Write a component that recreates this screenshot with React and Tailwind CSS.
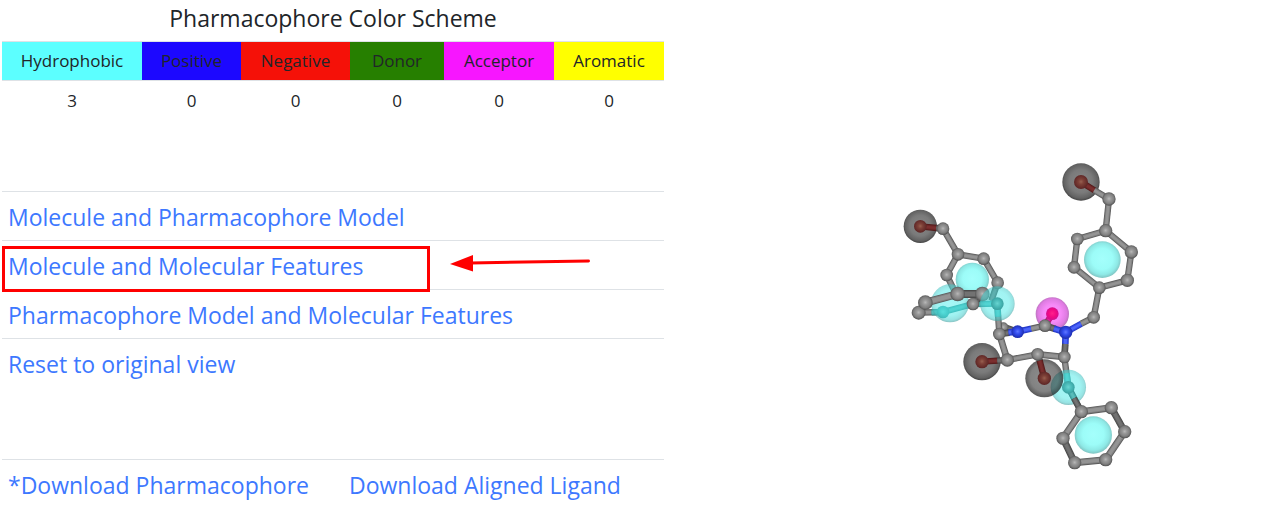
const features = [
  { name: 'Hydrophobic', count: 3, col: 'w-[140px]', bg: 'bg-[#5cffff]' },
  { name: 'Positive', count: 0, col: 'w-[99px]', bg: 'bg-[#1c08ff]' },
  { name: 'Negative', count: 0, col: 'w-[109px]', bg: 'bg-[#f51108]' },
  { name: 'Donor', count: 0, col: 'w-[94px]', bg: 'bg-[#267f00]' },
  { name: 'Acceptor', count: 0, col: 'w-[110px]', bg: 'bg-[#f716ff]' },
  { name: 'Aromatic', count: 0, col: 'w-[110px]', bg: 'bg-[#ffff00]' },
];

const tones = {
  gray: ['#5c5c5c', '#808080', '#949494'],
  dark: ['#484848', '#5e5e5e', '#727272'],
  blue: ['#2438c4', '#3049e6', '#4c64f8'],
  red: ['#541c1c', '#6c2626', '#7a2e2e'],
  teal: ['#389696', '#46acac', '#58bcba'],
  pink: ['#b8147c', '#d8148c', '#e4209a'],
};

function Bond({ p, tone = 'gray', w = 19 }) {
  const [x1, y1, x2, y2] = p;
  const [edge, mid, light] = tones[tone];
  return (
    <g strokeLinecap="butt">
      <line x1={x1} y1={y1} x2={x2} y2={y2} stroke={edge} strokeWidth={w} />
      <line x1={x1} y1={y1} x2={x2} y2={y2} stroke={mid} strokeWidth={w - 5} />
      <line x1={x1} y1={y1} x2={x2} y2={y2} stroke={light} strokeWidth={w - 11} />
    </g>
  );
}

const Atom = ({ x, y, r = 19, fill = 'url(#carbon)' }) => <circle cx={x} cy={y} r={r} fill={fill} />;

const Sphere = ({ x, y, r, kind }) => <circle cx={x} cy={y} r={r} fill={kind} />;

function Gradient({ id, stops }) {
  return (
    <radialGradient id={id} cx="0.5" cy="0.48" r="0.52">
      {stops.map(([offset, color, opacity]) => (
        <stop key={offset} offset={offset} stopColor={color} stopOpacity={opacity} />
      ))}
    </radialGradient>
  );
}

function Molecule() {
  return (
    <svg viewBox="0 0 780 990" className="h-[330px] w-[260px]" role="img" aria-label="Ligand structure">
      <defs>
        <Gradient id="carbon" stops={[[0, '#b8b8b8', 1], [0.3, '#9a9a9a', 1], [0.7, '#808080', 1], [1, '#505050', 1]]} />
        <Gradient id="nitrogen" stops={[[0, '#6078ff', 1], [0.4, '#344ef0', 1], [1, '#1c2cac', 1]]} />
        <Gradient id="bromine" stops={[[0, '#986050', 1], [0.35, '#7e4138', 1], [1, '#5c2424', 1]]} />
        <Gradient id="tealAtom" stops={[[0, '#68d4d0', 1], [0.5, '#4abbb9', 1], [1, '#38a09f', 1]]} />
        <Gradient id="oxygen" stops={[[0, '#ff208c', 1], [0.6, '#f00884', 1], [1, '#cf1090', 1]]} />
        <Gradient id="cyanSolid" stops={[[0, '#a4fffc', 1], [0.55, '#9cfcf8', 1], [0.82, '#8ee9e6', 1], [1, '#80c4c2', 1]]} />
        <Gradient id="cyanGlass" stops={[[0, '#4eeeee', 0.5], [0.65, '#4ae8e6', 0.52], [0.88, '#46cccc', 0.56], [1, '#4aa0a0', 0.65]]} />
        <Gradient id="darkGlass" stops={[[0, '#202020', 0.5], [0.7, '#202020', 0.56], [1, '#141414', 0.72]]} />
        <Gradient id="darkBall" stops={[[0, '#888888', 1], [0.6, '#7a7a7a', 1], [0.88, '#626262', 1], [1, '#444444', 1]]} />
        <Gradient id="pinkBall" stops={[[0, '#ff94ff', 1], [0.5, '#f58af7', 1], [0.82, '#df7be2', 1], [1, '#b572b8', 1]]} />
      </defs>

      <Sphere x={573} y={96} r={56} kind="url(#darkBall)" />
      <Bond p={[573, 96, 615, 122]} tone="red" />
      <Bond p={[613, 121, 657, 147]} />
      <Bond p={[657, 147, 647, 242]} />
      <Bond p={[647, 242, 562, 267]} />
      <Bond p={[562, 267, 552, 352]} />
      <Bond p={[552, 352, 628, 413]} />
      <Bond p={[628, 413, 712, 391]} />
      <Bond p={[712, 391, 724, 306]} />
      <Bond p={[724, 306, 647, 242]} />
      <Bond p={[628, 413, 611, 502]} />
      <Sphere x={637} y={329} r={55} kind="url(#cyanSolid)" />
      <Atom x={573} y={96} r={21} fill="url(#bromine)" />
      <Atom x={657} y={147} r={20} />
      <Atom x={647} y={242} r={20} />
      <Atom x={562} y={267} />
      <Atom x={552} y={352} />
      <Atom x={628} y={413} />
      <Atom x={712} y={391} r={20} />
      <Atom x={724} y={306} r={20} />

      <Sphere x={91} y={229} r={50} kind="url(#darkBall)" />
      <Bond p={[91, 229, 140, 234]} tone="red" />
      <Bond p={[139, 234, 159, 236]} tone="dark" />
      <Bond p={[159, 236, 204, 313]} />
      <Bond p={[204, 313, 281, 326]} />
      <Bond p={[281, 326, 323, 398]} />
      <Bond p={[204, 313, 170, 375]} />
      <Bond p={[170, 375, 197, 430]} />
      <Bond p={[323, 398, 304, 452]} tone="dark" />
      <Atom x={91} y={229} fill="url(#bromine)" />
      <Atom x={159} y={236} />
      <Atom x={204} y={313} />
      <Atom x={281} y={326} />
      <Atom x={170} y={375} />
      <Atom x={323} y={398} />
      <Sphere x={247} y={388} r={50} kind="url(#cyanSolid)" />

      <Bond p={[340, 530, 383, 545]} tone="dark" />
      <Atom x={340} y={532} r={15} />
      <Bond p={[322, 461, 328, 552]} />
      <Bond p={[322, 461, 324, 500]} tone="teal" />
      <Bond p={[249, 462, 159, 486]} tone="teal" />
      <Bond p={[249, 462, 322, 461]} tone="teal" />
      <Bond p={[86, 488, 159, 486]} />
      <Bond p={[125, 487, 159, 486]} tone="teal" />
      <Atom x={159} y={486} fill="url(#tealAtom)" />
      <Sphere x={180} y={460} r={57} kind="url(#cyanGlass)" />
      <Bond p={[86, 488, 106, 458]} tone="dark" w={20} />
      <Atom x={86} y={488} r={21} />
      <Bond p={[249, 462, 277, 432]} tone="dark" w={20} />
      <Atom x={249} y={462} />
      <Bond p={[106, 458, 203, 432]} w={24} />
      <Bond p={[203, 432, 277, 432]} w={24} tone="dark" />
      <Atom x={106} y={458} r={22} />
      <Atom x={203} y={432} r={22} />
      <Atom x={277} y={432} r={22} />
      <Sphere x={322} y={461} r={52} kind="url(#cyanGlass)" />
      <Atom x={322} y={461} fill="url(#tealAtom)" />

      <Sphere x={487} y={492} r={50} kind="url(#pinkBall)" />
      <Bond p={[465, 527, 487, 491]} tone="pink" />
      <Atom x={487} y={491} fill="url(#oxygen)" />
      <Bond p={[383, 545, 424, 536]} tone="blue" />
      <Bond p={[424, 536, 465, 527]} />
      <Bond p={[465, 527, 496, 537]} tone="dark" w={20} />
      <Bond p={[492, 536, 527, 547]} tone="blue" w={20} />
      <Bond p={[527, 547, 574, 521]} tone="blue" />
      <Bond p={[574, 521, 611, 502]} />
      <Bond p={[527, 547, 526, 582]} tone="blue" w={20} />
      <Bond p={[526, 582, 523, 621]} tone="dark" w={20} />
      <Bond p={[328, 552, 358, 548]} tone="dark" w={20} />
      <Bond p={[356, 547, 383, 545]} tone="blue" w={20} />
      <Bond p={[328, 552, 352, 630]} w={20} />
      <Bond p={[352, 630, 443, 613]} />
      <Bond p={[443, 613, 523, 621]} w={20} />
      <Bond p={[443, 613, 450, 634]} />
      <Bond p={[523, 621, 535, 712]} />
      <Bond p={[530, 670, 535, 712]} tone="teal" />
      <Bond p={[535, 712, 574, 785]} />
      <Sphere x={535} y={712} r={53} kind="url(#cyanGlass)" />
      <Bond p={[535, 712, 553, 746]} tone="teal" />
      <Bond p={[552, 745, 574, 785]} tone="dark" />
      <Sphere x={276} y={635} r={56} kind="url(#darkBall)" />
      <Bond p={[276, 635, 323, 632]} tone="red" />
      <Bond p={[322, 632, 352, 630]} tone="dark" />
      <Sphere x={463} y={685} r={57} kind="url(#darkGlass)" />
      <Bond p={[449, 632, 463, 685]} tone="red" />
      <Atom x={276} y={635} r={20} fill="url(#bromine)" />
      <Atom x={463} y={685} r={20} fill="url(#bromine)" />
      <Atom x={611} y={502} />
      <Atom x={465} y={527} />
      <Atom x={383} y={545} fill="url(#nitrogen)" />
      <Atom x={527} y={547} r={20} fill="url(#nitrogen)" />
      <Atom x={328} y={552} />
      <Atom x={352} y={630} r={20} />
      <Atom x={443} y={613} />
      <Atom x={523} y={621} />
      <Atom x={535} y={712} fill="url(#tealAtom)" />

      <Bond p={[574, 785, 664, 773]} w={21} />
      <Bond p={[664, 773, 704, 845]} w={21} tone="dark" />
      <Bond p={[704, 845, 647, 929]} w={21} />
      <Bond p={[647, 929, 554, 938]} w={21} />
      <Bond p={[554, 938, 519, 865]} w={21} tone="dark" />
      <Bond p={[519, 865, 574, 785]} w={21} />
      <Sphere x={610} y={855} r={56} kind="url(#cyanSolid)" />
      <Atom x={574} y={785} r={20} />
      <Atom x={664} y={773} r={20} />
      <Atom x={704} y={845} r={20} />
      <Atom x={647} y={929} r={20} />
      <Atom x={554} y={938} r={20} />
      <Atom x={519} y={865} r={20} />
    </svg>
  );
}

const rowClass = 'flex h-[49px] items-center border-t border-[#dee2e6] px-1.5 pt-0.5';

export default function App() {
  return (
    <main className="grid grid-cols-[52fr_48fr] bg-white font-['Open_Sans','Noto_Sans',sans-serif] text-[#212529]">
      <section className="pl-0.5 pr-px">
        <h1 className="h-[41px] pt-0.5 text-center text-[23px] leading-8">Pharmacophore Color Scheme</h1>
        <table className="w-full table-fixed border-collapse text-center text-[17px] leading-6">
          <thead>
            <tr className="h-[39px] border-y border-[#dee2e6]">
              {features.map((f) => (
                <th key={f.name} scope="col" className={`${f.col} ${f.bg} p-0 font-normal`}>{f.name}</th>
              ))}
            </tr>
          </thead>
          <tbody>
            <tr className="h-10">
              {features.map((f) => <td key={f.name} className="p-0">{f.count}</td>)}
            </tr>
          </tbody>
        </table>

        <nav className="mt-[70px] text-[23px] leading-8 text-[#3d78ff]">
          <div className={rowClass}><a href="#pharmacophore">Molecule and Pharmacophore Model</a></div>
          <div className={`relative ${rowClass}`}>
            <a href="#features">Molecule and Molecular Features</a>
            <div className="absolute left-0 top-[5px] h-[46px] w-[428px] border-3 border-[#ff0000]" />
            <svg viewBox="0 0 142 20" className="absolute left-[448px] top-[11px] h-5 w-[142px]" aria-hidden="true">
              <path d="M21 11 L138.500 9" stroke="#ff0000" strokeWidth="3" strokeLinecap="round" />
              <path d="M0 12 L23 3 V19.500 Z" fill="#ff0000" />
            </svg>
          </div>
          <div className={rowClass}><a href="#model">Pharmacophore Model and Molecular Features</a></div>
          <div className={rowClass}><a href="#reset">Reset to original view</a></div>
        </nav>

        <footer className="mt-[72px] text-[23px] leading-8 text-[#3d78ff]">
          <div className={`${rowClass} gap-10`}>
            <a href="#download-pharmacophore">*Download Pharmacophore</a>
            <a href="#download-ligand">Download Aligned Ligand</a>
          </div>
        </footer>
      </section>
      <section className="flex items-start justify-center pl-[97px] pt-[150px]">
        <Molecule />
      </section>
    </main>
  );
}
